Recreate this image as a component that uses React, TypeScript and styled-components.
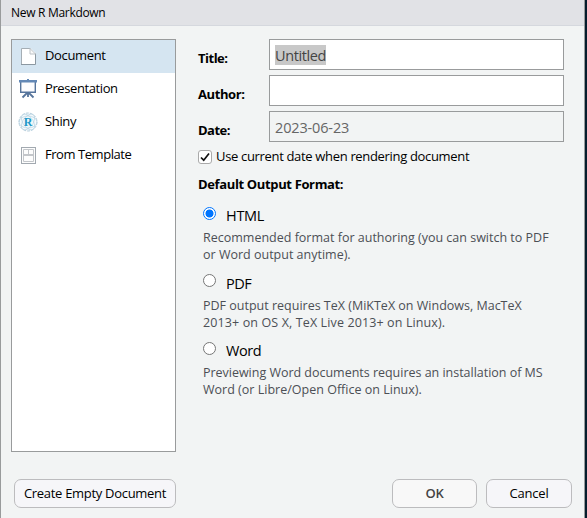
import React from "react";
import styled, { createGlobalStyle } from "styled-components";

const GlobalStyle = createGlobalStyle`
  html, body { margin: 0; padding: 0; }
  * { box-sizing: border-box; }
  body { background: #051c2c; overflow: hidden; }
`;

const Dialog = styled.div`
  width: 585px;
  height: 518px;
  display: flex;
  flex-direction: column;
  background: #f2f4f4;
  border: solid #999b9c;
  border-width: 0 1px;
  font-family: "Open Sans", "Noto Sans", sans-serif;
  font-size: 13px;
  color: #000;
`;

const TitleBar = styled.header`
  height: 26px;
  padding-left: 10px;
  background: #e1e2e6;
  border-bottom: 1px solid #d5d8de;
  line-height: 25px;
  font-size: 12px;
`;

const Text = styled.span<{ $track?: number }>`
  white-space: nowrap;
  letter-spacing: ${(p) => p.$track ?? -0.2}px;
`;

const Content = styled.main`
  display: flex;
  gap: 22px;
  padding: 13px 0 0 10px;
`;

const TypeList = styled.nav`
  width: 165px;
  height: 413px;
  border: 1px solid #999b9c;
  background: #fff;
`;

const TypeItem = styled.div<{ $selected?: boolean }>`
  height: 33px;
  padding: 0 0 4px 6px;
  display: flex;
  align-items: center;
  gap: 7px;
  background: ${(p) => (p.$selected ? "#d5e5f1" : "transparent")};
`;

const IconBox = styled.span`
  width: 20px;
  height: 20px;
  margin-top: 3px;
  flex: none;
  svg { display: block; }
`;

const Form = styled.section`
  width: 366px;
`;

const Field = styled.label`
  display: flex;
  height: 31px;
  margin-bottom: 5px;
`;

const FieldLabel = styled.span`
  width: 71px;
  padding-top: 4px;
  line-height: 30px;
  font-weight: 700;
`;

const Input = styled.span<{ $disabled?: boolean }>`
  width: 295px;
  border: 1px solid #999b9c;
  padding: ${(p) => (p.$disabled ? "6px 5px 4px" : "5px")};
  display: flex;
  align-items: center;
  background: ${(p) => (p.$disabled ? "#f2f4f4" : "#fff")};
  color: ${(p) => (p.$disabled ? "#666" : "#444")};
  font-size: 14.5px;
`;

const Selection = styled.span`
  height: 20px;
  line-height: 21px;
  background: #c8c8c8;
`;

const CheckRow = styled.div`
  display: flex;
  align-items: center;
  height: 20px;
  margin-top: -1px;
  gap: 4px;
`;

const Checkbox = styled.span`
  width: 14px;
  height: 14px;
  border: 1px solid #aaa;
  border-radius: 3px;
  background: #fff;
  margin-top: 1px;
  svg { display: block; }
`;

const Heading = styled.h2`
  margin: 8px 0 9px;
  font-size: 13px;
  line-height: 20px;
  font-weight: 700;
`;

const Option = styled.div`
  height: 67.5px;
  padding-left: 5px;
`;

const OptionHead = styled.div`
  height: 26px;
  padding-bottom: 1px;
  display: flex;
  align-items: center;
  gap: 10px;
  font-size: 14.5px;
`;

const Radio = styled.span<{ $on?: boolean }>`
  width: 13px;
  height: 13px;
  margin-bottom: 5px;
  border-radius: 50%;
  border: 1px solid ${(p) => (p.$on ? "#0075ff" : "#767676")};
  background: ${(p) =>
    p.$on ? "radial-gradient(circle, #0075ff 3.6px, #fff 4.4px)" : "#fff"};
`;

const Description = styled.p`
  margin: 0;
  line-height: 17px;
  color: #4c4f55;
  font-size: 12.5px;
`;

const Footer = styled.footer`
  display: flex;
  margin: 27px 12px 0 13px;
  height: 29px;
`;

const Button = styled.button<{ $w: number; $primary?: boolean }>`
  width: ${(p) => p.$w}px;
  height: 29px;
  padding: 0;
  border: 1px solid #bcbcbe;
  border-radius: 7px;
  background: ${(p) => (p.$primary ? "#f8f8f8" : "#f6f6f9")};
  color: ${(p) => (p.$primary ? "#444" : "#000")};
  font: inherit;
  font-weight: ${(p) => (p.$primary ? 600 : 400)};
  line-height: 27px;
`;

const Spacer = styled.span<{ $w?: number }>`
  flex: ${(p) => (p.$w ? `0 0 ${p.$w}px` : "1")};
`;

const DocumentIcon = () => (
  <svg width="20" height="20" viewBox="0 0 20 20" fill="none">
    <path d="M3.500 2.500H13L17.500 7V18.500H3.500Z" fill="#fff" />
    <path d="M12.500 2.500H3.500V18.500" stroke="#a5aeb5" />
    <path d="M3 18.500H17.500V7.500" stroke="#8c98a1" />
    <path d="M12 2.500V8H17.500Z" fill="#fafafa" stroke="#bcc2c7" />
  </svg>
);

const PresentationIcon = () => (
  <svg width="20" height="20" viewBox="0 0 20 20" fill="none">
    <path d="M10 13L4.500 18.500M10 13L15.500 18.500M10 13V18" stroke="#56749c" strokeWidth="1.800" />
    <path d="M2.700 3V13.300H17.300V3" fill="#fcfcfe" stroke="#56749c" strokeWidth="1.400" />
    <path d="M1 2.300H19M9 1H11" stroke="#6388b6" strokeWidth="2.500" />
  </svg>
);

const ShinyIcon = () => (
  <svg width="20" height="20" viewBox="0 0 20 20" fill="none">
    <circle cx="10" cy="10" r="9" fill="#f5fafc" stroke="#b5cddb" strokeDasharray="3 1" />
    <g stroke="#b8d3e2" strokeWidth=".7">
      <ellipse cx="10" cy="10" rx="5" ry="9" transform="rotate(35 10 10)" />
      <ellipse cx="10" cy="10" rx="5" ry="9" transform="rotate(-35 10 10)" />
      <ellipse cx="10" cy="10" rx="9" ry="6" />
    </g>
    <circle cx="10" cy="10" r="4.800" fill="#ecf6fa" />
    <text x="10" y="14" textAnchor="middle" fontFamily="Liberation Serif, serif" fontSize="12" fontWeight="700" fill="#2299c8">R</text>
  </svg>
);

const TemplateIcon = () => (
  <svg width="20" height="20" viewBox="0 0 20 20" fill="none">
    <rect x="3.500" y="2.500" width="14" height="16" fill="#fdfdfd" stroke="#a2a9b0" />
    <path d="M5.500 4.500H15.500V16.500H5.500ZM10.500 4.500V9.500" stroke="#c3c6ca" />
    <path d="M5 10H16" stroke="#c3c6ca" strokeWidth="2" />
  </svg>
);

const types = [
  { name: "Document", icon: <DocumentIcon />, track: -0.35 },
  { name: "Presentation", icon: <PresentationIcon />, track: -0.4 },
  { name: "Shiny", icon: <ShinyIcon />, track: -0.35 },
  { name: "From Template", icon: <TemplateIcon />, track: -0.45 },
];

const options = [
  {
    name: "HTML", track: -0.3, on: true,
    lines: [
      { text: "Recommended format for authoring (you can switch to PDF", track: 0 },
      { text: "or Word output anytime).", track: 0 },
    ],
  },
  {
    name: "PDF", track: -0.5,
    lines: [
      { text: "PDF output requires TeX (MiKTeX on Windows, MacTeX", track: 0 },
      { text: "2013+ on OS X, TeX Live 2013+ on Linux).", track: 0.12 },
    ],
  },
  {
    name: "Word", track: -0.4,
    lines: [
      { text: "Previewing Word documents requires an installation of MS", track: -0.02 },
      { text: "Word (or Libre/Open Office on Linux).", track: 0.01 },
    ],
  },
];

export default function App() {
  return (
    <>
      <GlobalStyle />
      <Dialog role="dialog">
        <TitleBar><Text $track={-0.3}>New R Markdown</Text></TitleBar>
        <Content>
          <TypeList>
            {types.map((t, i) => (
              <TypeItem key={t.name} $selected={i === 0}>
                <IconBox>{t.icon}</IconBox>
                <Text $track={t.track}>{t.name}</Text>
              </TypeItem>
            ))}
          </TypeList>
          <Form>
            <Field>
              <FieldLabel><Text $track={-0.5}>Title:</Text></FieldLabel>
              <Input><Selection><Text $track={-0.4}>Untitled</Text></Selection></Input>
            </Field>
            <Field>
              <FieldLabel><Text $track={-0.4}>Author:</Text></FieldLabel>
              <Input />
            </Field>
            <Field>
              <FieldLabel><Text $track={-0.5}>Date:</Text></FieldLabel>
              <Input $disabled><Text $track={-0.15}>2023-06-23</Text></Input>
            </Field>
            <CheckRow>
              <Checkbox>
                <svg width="12" height="12" viewBox="0 0 12 12" fill="none">
                  <path d="M2 6.500L4.700 9.200L10 2.500" stroke="#111" strokeWidth="1.700" />
                </svg>
              </Checkbox>
              <Text $track={-0.33}>Use current date when rendering document</Text>
            </CheckRow>
            <Heading><Text $track={-0.36}>Default Output Format:</Text></Heading>
            {options.map((o) => (
              <Option key={o.name}>
                <OptionHead><Radio $on={o.on} /><Text $track={o.track}>{o.name}</Text></OptionHead>
                <Description>
                  {o.lines.map((l, i) => (
                    <React.Fragment key={l.text}>
                      {i > 0 && <br />}
                      <Text $track={l.track}>{l.text}</Text>
                    </React.Fragment>
                  ))}
                </Description>
              </Option>
            ))}
          </Form>
        </Content>
        <Footer>
          <Button $w={162}><Text $track={-0.3}>Create Empty Document</Text></Button>
          <Spacer />
          <Button $w={85} $primary><Text $track={-0.3}>OK</Text></Button>
          <Spacer $w={9} />
          <Button $w={86}><Text $track={-0.2}>Cancel</Text></Button>
        </Footer>
      </Dialog>
    </>
  );
}
